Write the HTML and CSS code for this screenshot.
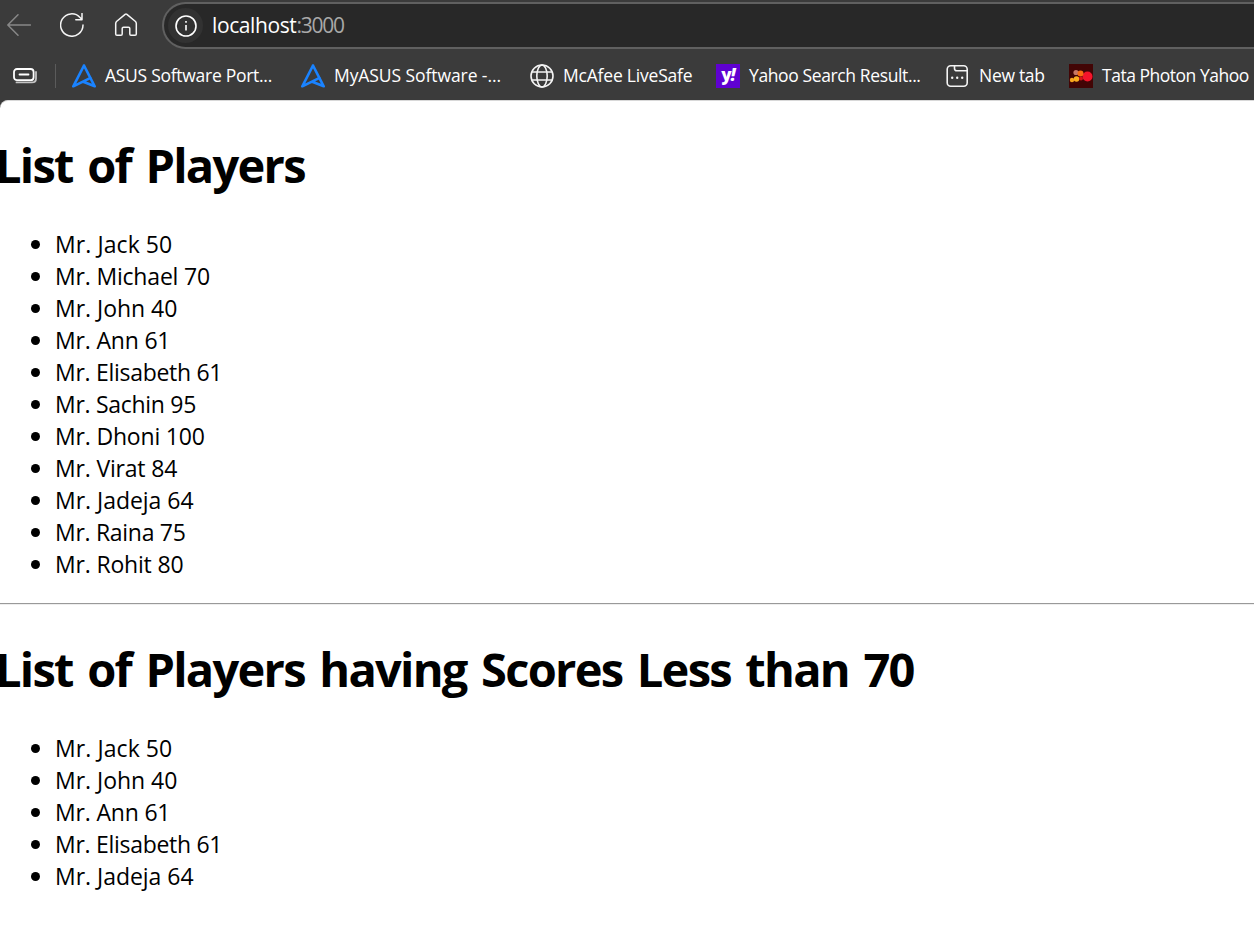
FILE: index.html
```html
<!DOCTYPE html>
<html lang="en">
<head>
<meta charset="utf-8">
<title>List of Players</title>
<link rel="stylesheet" href="styles.css">
</head>
<body>
<svg class="defs" aria-hidden="true">
  <symbol id="asus" viewBox="0 0 24 24">
    <path d="M12 1.5 1.3 22.3 18.5 13.8M12 1.5 22.7 22.3 11.2 17.8" fill="none" stroke="#1a83ff" stroke-width="2.6" stroke-linejoin="round" stroke-linecap="round"/>
  </symbol>
</svg>
<header class="browser">
  <div class="toolbar">
    <svg class="nav-icon back" viewBox="0 0 24 24"><path d="M23.5 12H.8M11 1.8.8 12 11 22.2"/></svg>
    <svg class="nav-icon reload" viewBox="0 0 24 24"><path d="M23 12A11.2 11.2 0 1 1 20 4.4L22 6.5M22 .5V6.8H15.8"/></svg>
    <svg class="nav-icon home" viewBox="0 0 24 24"><path d="M11.1 1.4 2.5 8.5Q1.7 9.3 1.7 10.5V21Q1.7 22.3 3 22.3H7Q8.2 22.3 8.2 21V15.5Q8.2 14.2 9.5 14.2H14.5Q15.8 14.2 15.8 15.5V21Q15.8 22.3 17 22.3H21Q22.3 22.3 22.3 21V10.5Q22.3 9.3 21.5 8.5L12.9 1.4Q12 .8 11.1 1.4Z"/></svg>
    <div class="address">
      <span class="site-info"><svg viewBox="0 0 24 24"><circle cx="12" cy="12" r="10"/><path d="M12 11v5.5"/><path d="M12 7v1.8"/></svg></span>
      <span class="url">localhost<span class="port">:3000</span></span>
    </div>
  </div>
  <nav class="bookmarks">
    <svg class="stack" viewBox="0 0 26 18"><rect x="2" y="2" width="19.6" height="11.2" rx="3"/><path d="M7.5 7.5H16.5"/><path class="shade" d="M4.5 15.4H20Q24 15.4 24 11.4V5"/></svg>
    <span class="divider"></span>
    <a class="bookmark b-asus"><svg class="favicon"><use href="#asus"/></svg><span class="label">ASUS Software Port...</span></a>
    <a class="bookmark b-myasus"><svg class="favicon"><use href="#asus"/></svg><span class="label">MyASUS Software -...</span></a>
    <a class="bookmark b-mcafee"><svg class="favicon line" viewBox="0 0 24 24"><circle cx="12" cy="12" r="11"/><ellipse cx="12" cy="12" rx="5.2" ry="11"/><path d="M2 8H22M2 16H22"/></svg><span class="label">McAfee LiveSafe</span></a>
    <a class="bookmark b-yahoo"><span class="favicon yahoo">y<i>!</i></span><span class="label">Yahoo Search Result...</span></a>
    <a class="bookmark b-newtab"><svg class="favicon line" viewBox="0 0 24 24"><rect x="1.2" y="1.8" width="20" height="20.4" rx="3.5"/><path d="M8.5 2V4.5Q8.5 6.8 11 6.8H21"/><path class="dots" d="M6.2 13.8h.01M11.2 13.8h.01M16.2 13.8h.01"/></svg><span class="label">New tab</span></a>
    <a class="bookmark b-tata"><svg class="favicon" viewBox="0 0 24 24"><rect width="24" height="24" fill="#420505"/><circle cx="18.5" cy="12.5" r="5" fill="#f5142b"/><circle cx="7" cy="8.5" r="2.6" fill="#c77765"/><circle cx="11.5" cy="9.5" r="3" fill="#f96c12"/><circle cx="3" cy="16" r="2.2" fill="#f9a51c"/><circle cx="7.5" cy="15" r="2.8" fill="#fbae20"/><circle cx="12" cy="14.5" r="2" fill="#d51719"/></svg><span class="label">Tata Photon Yahoo</span></a>
  </nav>
</header>
<main class="page">
  <h1>List of Players</h1>
  <ul>
    <li class="wide"><span>Mr. Jack 50</span></li>
    <li><span>Mr. Michael 70</span></li>
    <li class="normal"><span>Mr. John 40</span></li>
    <li><span>Mr. Ann 61</span></li>
    <li class="tight"><span>Mr. Elisabeth 61</span></li>
    <li class="tight"><span>Mr. Sachin 95</span></li>
    <li><span>Mr. Dhoni 100</span></li>
    <li><span>Mr. Virat 84</span></li>
    <li class="normal"><span>Mr. Jadeja 64</span></li>
    <li class="tight"><span>Mr. Raina 75</span></li>
    <li><span>Mr. Rohit 80</span></li>
  </ul>
  <hr>
  <h1 class="second">List of Players having Scores Less than 70</h1>
  <ul>
    <li class="wide"><span>Mr. Jack 50</span></li>
    <li class="normal"><span>Mr. John 40</span></li>
    <li><span>Mr. Ann 61</span></li>
    <li class="tight"><span>Mr. Elisabeth 61</span></li>
    <li class="normal"><span>Mr. Jadeja 64</span></li>
  </ul>
</main>
</body>
</html>
```

FILE: styles.css
```css
* { box-sizing: border-box; }
body {
  margin: 0;
  height: 925px;
  overflow: hidden;
  background: #3b3b3b;
  font-family: "Segoe UI", "Open Sans", "Noto Sans", sans-serif;
}
.defs { position: absolute; width: 0; height: 0; }
.browser { height: 100px; overflow: hidden; color: #fff; }
.toolbar { display: flex; height: 52px; padding: 2px 0 3px 7px; }
.nav-icon {
  flex: none;
  width: 24px;
  height: 24px;
  margin-top: 11px;
  fill: none;
  stroke: #f5f5f5;
  stroke-width: 1.5;
  stroke-linecap: round;
  stroke-linejoin: round;
}
.back { stroke: #888; }
.reload { margin-left: 29px; }
.home { margin-left: 30px; }
.address {
  display: flex;
  align-items: center;
  flex: 1;
  margin-left: 24px;
  padding-left: 4px;
  background: #282828;
  border: 2px solid #606060;
  border-right: 0;
  border-radius: 24px 0 0 24px;
}
.site-info {
  display: grid;
  place-items: center;
  width: 35px;
  height: 35px;
  border-radius: 50%;
  background: #323232;
}
.site-info svg { width: 24px; height: 24px; fill: none; stroke: #fff; stroke-width: 1.6; }
.url { margin-left: 9px; padding-bottom: 1px; font-size: 21px; letter-spacing: -0.4px; }
.port { color: #a9a9a9; letter-spacing: -1.2px; }
.bookmarks { display: flex; align-items: center; height: 48px; padding-left: 12px; }
.stack { flex: none; width: 26px; height: 18px; fill: none; stroke: #fff; stroke-width: 1.8; stroke-linecap: round; }
.shade { stroke: #c4c4c4; }
.divider { flex: none; width: 1px; height: 24px; margin: 0 16px 0 17px; background: #5b5b5b; }
.bookmark { display: flex; flex: none; align-items: center; gap: 9px; font-size: 17.5px; white-space: nowrap; }
.label { padding-bottom: 2px; }
.favicon { flex: none; width: 24px; height: 24px; }
.line { fill: none; stroke: #f4f4f4; stroke-width: 1.6; }
.dots { stroke-width: 2.4; stroke-linecap: round; }
.yahoo {
  background: #5f01d1;
  font-size: 17px;
  font-weight: 800;
  line-height: 21px;
  text-align: center;
  letter-spacing: -1px;
}
.b-asus, .b-myasus { width: 229px; }
.b-asus { letter-spacing: -0.28px; }
.b-myasus { letter-spacing: -0.08px; }
.b-mcafee { width: 186px; letter-spacing: -0.2px; }
.b-yahoo { width: 230px; letter-spacing: -0.38px; }
.b-newtab { width: 123px; letter-spacing: -0.3px; }
.b-tata { letter-spacing: -0.48px; }
.page {
  height: 825px;
  overflow: hidden;
  background: #fff;
  border-top: 1px solid #d8d8d8;
  border-top-left-radius: 8px;
  color: #000;
}
h1 {
  margin: 32px 0 32px -5px;
  font-size: 47px;
  line-height: 64px;
  font-weight: 700;
  letter-spacing: -1.72px;
  word-spacing: 3.9px;
  white-space: nowrap;
}
ul { margin: 0; padding-left: 55px; list-style: none; }
li {
  display: flex;
  align-items: center;
  height: 32px;
  font-size: 23px;
  letter-spacing: -0.18px;
  white-space: nowrap;
}
li span { padding-bottom: 2px; }
li.normal { letter-spacing: -0.03px; }
li.wide { letter-spacing: 0.08px; }
li.tight { letter-spacing: -0.29px; }
li::before {
  content: "";
  width: 9px;
  height: 9px;
  margin-left: -24px;
  margin-right: 15px;
  margin-bottom: 1px;
  border-radius: 50%;
  background: #000;
}
hr { height: 2px; margin: 22px 0 0; border: 0; border-top: 1px solid #999; border-bottom: 1px solid #eee; }
.second { margin-top: 32px; }
```
